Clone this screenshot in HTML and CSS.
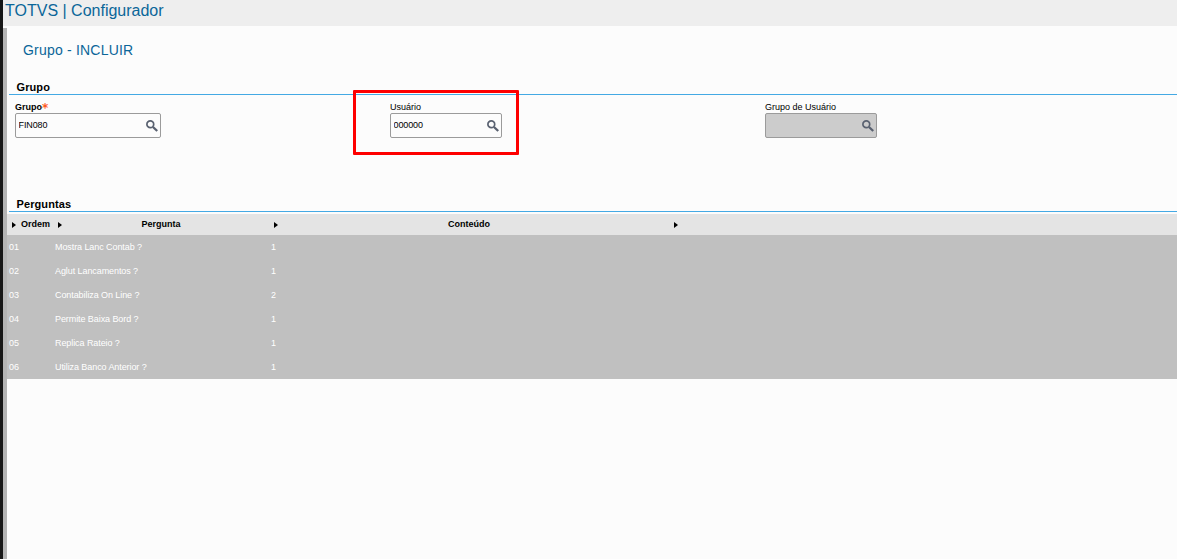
FILE: index.html
```html
<!DOCTYPE html>
<html lang="pt-BR">
<head>
  <meta charset="UTF-8">
  <title>TOTVS | Configurador</title>
  <link rel="stylesheet" href="styles.css">
</head>
<body>
  <svg class="defs" width="0" height="0">
    <symbol id="lupa" viewBox="0 0 12 12">
      <circle cx="4.3" cy="4.3" r="3.4" fill="none" stroke="#596170" stroke-width="1.7"/>
      <path d="M7 7l4.2 4" fill="none" stroke="#596170" stroke-width="2.3"/>
    </symbol>
  </svg>

  <header class="topbar">TOTVS | Configurador</header>

  <main class="content">
    <h1>Grupo - INCLUIR</h1>

    <h2>Grupo</h2>
    <div class="fields">
      <div class="field required">
        <label for="grupo">Grupo<span class="star">*</span></label>
        <div class="box wide"><input type="text" id="grupo" value="FIN080"><svg class="icon"><use href="#lupa"/></svg></div>
      </div>
      <div class="field">
        <label for="usuario">Usuário</label>
        <div class="box"><input type="text" id="usuario" value="000000"><svg class="icon"><use href="#lupa"/></svg></div>
        <div class="highlight"></div>
      </div>
      <div class="field">
        <label for="grupoUsuario">Grupo de Usuário</label>
        <div class="box disabled"><input type="text" id="grupoUsuario" disabled><svg class="icon"><use href="#lupa"/></svg></div>
      </div>
    </div>

    <h2 class="perguntas">Perguntas</h2>
    <table>
      <colgroup>
        <col class="c-ordem">
        <col class="c-pergunta">
        <col class="c-conteudo">
        <col>
      </colgroup>
      <thead>
        <tr>
          <th class="first"><i class="arrow"></i>Ordem</th>
          <th><i class="arrow"></i>Pergunta</th>
          <th><i class="arrow"></i>Conteúdo</th>
          <th><i class="arrow"></i></th>
        </tr>
      </thead>
      <tbody>
        <tr><td>01</td><td>Mostra Lanc Contab ?</td><td>1</td><td></td></tr>
        <tr><td>02</td><td>Aglut Lancamentos ?</td><td>1</td><td></td></tr>
        <tr><td>03</td><td>Contabiliza On Line ?</td><td>2</td><td></td></tr>
        <tr><td>04</td><td>Permite Baixa Bord ?</td><td>1</td><td></td></tr>
        <tr><td>05</td><td>Replica Rateio ?</td><td>1</td><td></td></tr>
        <tr><td>06</td><td>Utiliza Banco Anterior ?</td><td>1</td><td></td></tr>
      </tbody>
    </table>
  </main>
</body>
</html>
```
FILE: styles.css
```css
* {
  box-sizing: border-box;
}
body {
  margin: 0;
  height: 559px;
  overflow: hidden;
  border-left: 3px solid #171717;
  background: #fcfcfc;
  font-family: "Liberation Sans", Arial, sans-serif;
  font-size: 9px;
  color: #000;
}
.defs {
  display: block;
}
.topbar {
  height: 26px;
  padding-left: 2px;
  background: #eee;
  color: #0b6699;
  font-size: 16px;
  line-height: 21px;
}
.content {
  height: 531px;
  margin-top: 2px;
  border-left: 4px solid #b4b4b4;
}
h1 {
  margin: 0;
  height: 51px;
  padding: 12px 0 0 16px;
  color: #0b6699;
  font-size: 14px;
  font-weight: normal;
  letter-spacing: 0.2px;
  line-height: 20px;
}
h2 {
  margin: 0 0 0 2px;
  height: 16px;
  padding-left: 7.5px;
  border-bottom: 1px solid #44a9e4;
  font-size: 11px;
  letter-spacing: 0.1px;
  line-height: 16px;
}
.fields {
  display: grid;
  grid-template-columns: 375px 375px 1fr;
  height: 101px;
  padding: 6px 0 0 8px;
}
.field {
  position: relative;
}
.field label {
  display: block;
  height: 12px;
  line-height: 12px;
}
.required label {
  font-weight: bold;
}
.star {
  color: #ff5a1f;
  font-family: "DejaVu Sans", sans-serif;
  font-size: 12px;
  line-height: 10px;
  vertical-align: -2px;
}
.box {
  display: flex;
  align-items: center;
  width: 112px;
  height: 25px;
  padding: 0 2px;
  border: 1px solid #9b9b9b;
  border-radius: 2px;
}
.box.wide {
  width: 146px;
}
.box.disabled {
  background: #ccc;
}
.box input {
  flex: 1;
  min-width: 0;
  padding: 0 0 1px 0.5px;
  border: 0;
  outline: 0;
  background: transparent;
  font: inherit;
  letter-spacing: -0.1px;
  color: #000;
}
.icon {
  width: 12px;
  height: 12px;
}
.highlight {
  position: absolute;
  left: -37px;
  top: -11px;
  width: 166px;
  height: 65px;
  border: 3px solid #fe0000;
  border-radius: 1px;
}
.perguntas {
  margin-bottom: 2px;
}
table {
  width: 100%;
  table-layout: fixed;
  border-collapse: collapse;
}
.c-ordem {
  width: 46px;
}
.c-pergunta {
  width: 216px;
}
.c-conteudo {
  width: 400px;
}
th {
  position: relative;
  height: 21px;
  padding: 0 0 1px;
  background: #e4e4e4;
  line-height: 12px;
}
th.first {
  padding-left: 11px;
}
.arrow {
  position: absolute;
  left: 5px;
  top: 8px;
  border-left: 4px solid #000;
  border-top: 3px solid transparent;
  border-bottom: 3px solid transparent;
}
td {
  height: 24px;
  padding: 0 0 0 2px;
  background: #c0c0c0;
  color: #fff;
  letter-spacing: -0.08px;
  line-height: 12px;
}
```
